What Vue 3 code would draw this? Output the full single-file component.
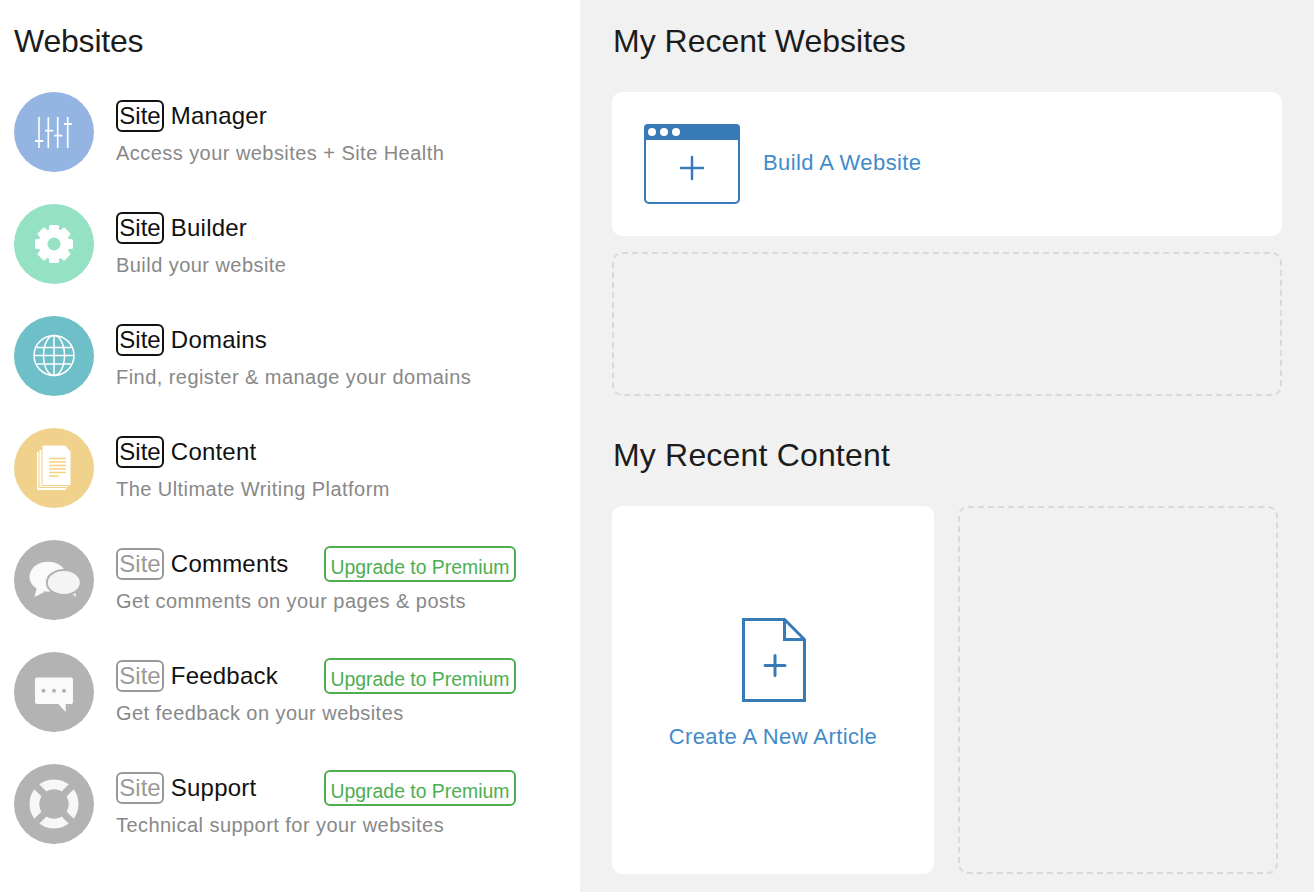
<script setup>
const rows = [
  { name: 'Manager', desc: 'Access your websites + Site Health', color: '#94b5e1', icon: 'sliders' },
  { name: 'Builder', desc: 'Build your website', color: '#94e1c4', icon: 'gear' },
  { name: 'Domains', desc: 'Find, register & manage your domains', color: '#6fbfc9', icon: 'globe' },
  { name: 'Content', desc: 'The Ultimate Writing Platform', color: '#f0d28c', icon: 'docs' },
  { name: 'Comments', desc: 'Get comments on your pages & posts', color: '#b3b3b3', icon: 'comments', premium: true },
  { name: 'Feedback', desc: 'Get feedback on your websites', color: '#b3b3b3', icon: 'feedback', premium: true },
  { name: 'Support', desc: 'Technical support for your websites', color: '#b3b3b3', icon: 'support', premium: true },
]
const gearTeeth = [0, 45, 90, 135]
</script>

<template>
  <div class="page">
    <aside class="left">
      <h1 class="heading left-heading">Websites</h1>
      <ul class="list">
        <li v-for="r in rows" :key="r.name" class="row">
          <div class="circle" :style="{ background: r.color }">
            <svg width="80" height="80" viewBox="0 0 80 80">
              <g v-if="r.icon === 'sliders'" stroke="#fff" fill="none">
                <path stroke-width="1.600" d="M25 25v31M34.300 25v31M43.700 25v31M53.700 25v31" />
                <path stroke-width="1.800" d="M21 49h8.300M31 38.700h8.300M40.300 43.700h8M50 32h7.700" />
              </g>
              <g v-else-if="r.icon === 'gear'" fill="#fff">
                <rect v-for="a in gearTeeth" :key="a" x="35" y="21" width="10" height="38" rx="1.500" :transform="`rotate(${a} 40 40)`" />
                <circle cx="40" cy="40" r="15.500" />
                <circle cx="40" cy="40" r="6.500" fill="#94e1c4" />
              </g>
              <g v-else-if="r.icon === 'globe'" fill="none" stroke="#fff" stroke-width="1.500">
                <circle cx="40" cy="39.500" r="20" />
                <ellipse cx="40" cy="39.500" rx="10.500" ry="20" />
                <path d="M40 19.500v40M20 39.500h40M22.500 31.500h35M22.500 48h35" />
              </g>
              <g v-else-if="r.icon === 'docs'">
                <rect x="23" y="24" width="29" height="38" fill="#fff" />
                <rect x="25" y="21.500" width="29.500" height="38" fill="#fff" stroke="#f0d28c" stroke-width="1" />
                <path d="M28 17h23l6 6.500v34H28z" fill="#fff" stroke="#f0d28c" stroke-width="1" />
                <path d="M35 30.500h17M35 34h17M35 37.500h17M35 41h17M35 44.500h17M35 48h10" stroke="#f6d27c" stroke-width="1.500" fill="none" />
              </g>
              <g v-else-if="r.icon === 'comments'">
                <path d="M23 47l-2.500 10 10-5z" fill="#fafafa" />
                <ellipse cx="34" cy="36.700" rx="18.500" ry="15" fill="#fafafa" />
                <path d="M54 51l8 6-1.500-11z" fill="#f4f4f4" />
                <ellipse cx="49.800" cy="42.500" rx="17" ry="12.500" fill="#f4f4f4" stroke="#b3b3b3" stroke-width="2" />
              </g>
              <g v-else-if="r.icon === 'feedback'">
                <path d="M23 25.500h34a2 2 0 0 1 2 2v22.500a2 2 0 0 1-2 2h-5.300v8l-7.500-8H23a2 2 0 0 1-2-2V27.500a2 2 0 0 1 2-2z" fill="#fafafa" />
                <circle cx="29.500" cy="38.700" r="2" fill="#b3b3b3" />
                <circle cx="40" cy="38.700" r="2" fill="#b3b3b3" />
                <circle cx="50" cy="38.700" r="2" fill="#b3b3b3" />
              </g>
              <g v-else>
                <circle cx="40" cy="40" r="19.500" fill="none" stroke="#f7f7f7" stroke-width="10" />
                <path d="M20 20l40 40M60 20L20 60" stroke="#b3b3b3" stroke-width="7" />
                <circle cx="40" cy="40" r="14.500" fill="#b3b3b3" />
              </g>
            </svg>
          </div>
          <div class="body">
            <div class="title-line">
              <span class="title"><span class="site" :class="{ dim: r.premium }">Site</span> {{ r.name }}</span>
              <span v-if="r.premium" class="upgrade">Upgrade to Premium</span>
            </div>
            <p class="desc">{{ r.desc }}</p>
          </div>
        </li>
      </ul>
    </aside>

    <main class="right">
      <h2 class="heading">My Recent Websites</h2>
      <a class="card build">
        <svg width="96" height="80" viewBox="0 0 96 80" class="window">
          <rect x="1" y="1" width="94" height="78" rx="4" fill="#fff" stroke="#377ab8" stroke-width="2" />
          <path d="M4 0h88a4 4 0 0 1 4 4v12H0V4a4 4 0 0 1 4-4z" fill="#377ab8" />
          <circle cx="8" cy="8" r="4" fill="#fff" />
          <circle cx="20" cy="8" r="4" fill="#fff" />
          <circle cx="32" cy="8" r="4" fill="#fff" />
          <path d="M48 33v22M37 44h22" stroke="#377ab8" stroke-width="2.500" stroke-linecap="round" fill="none" />
        </svg>
        <span class="link">Build A Website</span>
      </a>
      <div class="dashed wide"></div>

      <h2 class="heading content-heading">My Recent Content</h2>
      <div class="content-grid">
        <a class="card article">
          <svg width="64" height="84" viewBox="0 0 64 84" class="doc">
            <path d="M1.500 1.500h41l20 20v61h-61z" fill="#fff" stroke="#377ab8" stroke-width="3" />
            <path d="M42.500 1.500v20h20" fill="none" stroke="#377ab8" stroke-width="3" />
            <path d="M33 37.500v20M23 47.500h20" stroke="#377ab8" stroke-width="3" stroke-linecap="round" fill="none" />
          </svg>
          <span class="link">Create A New Article</span>
        </a>
        <div class="dashed"></div>
      </div>
    </main>
  </div>
</template>

<style scoped>
.page {
  display: flex;
  height: 892px;
  overflow: hidden;
  font-family: "Liberation Sans", Arial, sans-serif;
  background: #f1f1f1;
}
.left {
  width: 580px;
  flex: none;
  box-sizing: border-box;
  background: #fff;
  padding: 0 0 0 14px;
}
.heading {
  margin: 0;
  height: 82px;
  font-size: 32px;
  font-weight: 400;
  line-height: 82px;
  color: #1c1c1c;
}
.left-heading {
  height: 92px;
  letter-spacing: -0.2px;
}
.list {
  list-style: none;
  margin: 0;
  padding: 0;
}
.row {
  display: flex;
  height: 112px;
}
.circle {
  width: 80px;
  height: 80px;
  border-radius: 50%;
  flex: none;
}
.circle svg {
  display: block;
}
.body {
  margin-left: 22px;
  padding-top: 8px;
}
.title-line {
  display: flex;
  align-items: flex-start;
  height: 37px;
}
.title {
  width: 208px;
  flex: none;
  font-size: 24px;
  line-height: 32px;
  color: #111;
  white-space: pre;
  letter-spacing: 0.2px;
}
.site {
  display: inline-block;
  box-sizing: border-box;
  width: 48px;
  height: 32px;
  border: 2px solid #111;
  border-radius: 6px;
  text-align: center;
  line-height: 28px;
  vertical-align: top;
  letter-spacing: 0;
}
.site.dim {
  border-color: #9a9a9a;
  color: #9a9a9a;
}
.upgrade {
  flex: none;
  box-sizing: border-box;
  width: 192px;
  height: 36px;
  margin-top: -2px;
  border: 2px solid #4cae50;
  border-radius: 6px;
  color: #4cae50;
  font-size: 19.4px;
  line-height: 38px;
  text-align: center;
  white-space: nowrap;
}
.desc {
  margin: 0;
  font-size: 20px;
  line-height: 32px;
  color: #888;
  letter-spacing: 0.45px;
}
.right {
  flex: 1;
  padding-left: 32px;
  min-width: 0;
}
.right .heading {
  padding-left: 1px;
  height: 92px;
}
.card {
  display: flex;
  background: #fff;
  border-radius: 10px;
  box-sizing: border-box;
}
.build {
  width: 670px;
  height: 144px;
  align-items: center;
  padding-left: 32px;
  padding-bottom: 2px;
}
.window {
  margin-top: 2px;
}
.build .link {
  margin-left: 23px;
}
.link {
  color: #428bca;
  font-size: 22px;
  letter-spacing: 0.4px;
}
.dashed {
  box-sizing: border-box;
  border: 2px dashed #d9d9d9;
  border-radius: 10px;
}
.wide {
  width: 670px;
  height: 144px;
  margin-top: 16px;
}
.right .content-heading {
  height: 110px;
  line-height: 118px;
  letter-spacing: 0.18px;
}
.content-grid {
  display: grid;
  grid-template-columns: 322px 320px;
  column-gap: 24px;
  height: 368px;
}
.article {
  flex-direction: column;
  align-items: center;
  padding-top: 112px;
}
.doc {
  margin-left: 2px;
}
.article .link {
  margin-top: 20px;
  line-height: 30px;
}
</style>
